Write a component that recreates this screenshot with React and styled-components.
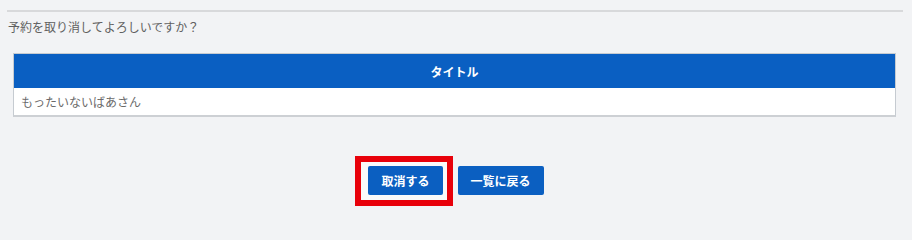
import React from "react";
import styled, { createGlobalStyle } from "styled-components";

const Global = createGlobalStyle`
  html, body { margin: 0; padding: 0; background: #f2f3f5; height: 206px; overflow: hidden; }
  body { font-family: "Noto Sans CJK JP", "Noto Sans", sans-serif; }
`;

const Page = styled.div`
  box-sizing: border-box;
  height: 206px;
  overflow: hidden;
  padding: 10px 9px 0 7px;
`;

const Rule = styled.div`
  height: 2px;
  background: #d8d9db;
`;

const Message = styled.p`
  margin: 7px 0 0 1px;
  font-size: 12px;
  line-height: 16px;
  color: #606060;
`;

const Table = styled.div`
  margin: 18px 7px 0 6px;
  border: 1px solid #c6cbd1;
  border-bottom: 2px solid #cdd0d4;
  background: #fff;
`;

const HeaderRow = styled.div`
  height: 34px;
  background: #0a5fc2;
  color: #fff;
  font-weight: 700;
  font-size: 12px;
  display: flex;
  align-items: center;
  justify-content: center;
`;

const BodyRow = styled.div`
  height: 27px;
  padding-left: 7px;
  display: flex;
  align-items: center;
  font-size: 12px;
  color: #6a6a6a;
`;

const Actions = styled.div`
  margin-top: 49px;
  display: flex;
  align-items: flex-start;
  justify-content: center;
  gap: 15px;
  padding-left: 2px;
`;

const Slot = styled.div`
  position: relative;
  display: flex;
`;

const Highlight = styled.div`
  position: absolute;
  z-index: 0;
  left: -13px;
  top: -10px;
  right: -10px;
  bottom: -11px;
  border: 6px solid #e8000a;
  background: #fafafa;
  pointer-events: none;
`;

const Button = styled.button`
  position: relative;
  z-index: 1;
  height: 29px;
  padding: 0 13px;
  border: none;
  border-radius: 2px;
  background: #0b5fc1;
  color: #fff;
  font-family: inherit;
  font-size: 12px;
  font-weight: 700;
  cursor: pointer;
`;

export default function App() {
  return (
    <>
      <Global />
      <Page>
        <Rule />
        <Message>予約を取り消してよろしいですか？</Message>
        <Table>
          <HeaderRow>タイトル</HeaderRow>
          <BodyRow>もったいないばあさん</BodyRow>
        </Table>
        <Actions>
          <Slot>
            <Highlight />
            <Button>取消する</Button>
          </Slot>
          <Slot>
            <Button>一覧に戻る</Button>
          </Slot>
        </Actions>
      </Page>
    </>
  );
}
